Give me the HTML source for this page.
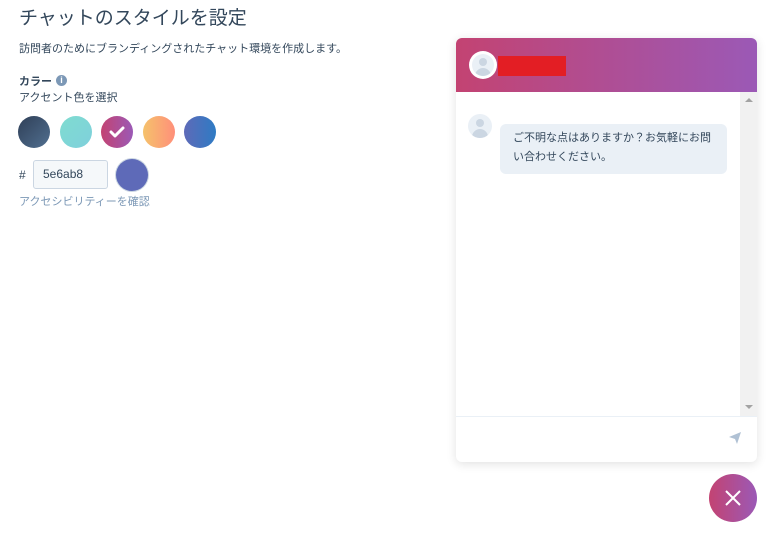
<!DOCTYPE html>
<html><head><meta charset="utf-8"><style>
body{margin:0;width:784px;height:533px;background:#fff;font-family:"Liberation Sans","Noto Sans CJK JP",sans-serif;color:#33475b;position:relative;overflow:hidden}
.a{position:absolute;white-space:nowrap}
.c{position:absolute;width:32px;height:32px;border-radius:50%}
</style></head><body>
<div class="a" style="left:19px;top:3px;font-size:19px;color:#33475b">チャットのスタイルを設定</div>
<div class="a" style="left:19px;top:40px;font-size:11px">訪問者のためにブランディングされたチャット環境を作成します。</div>
<div class="a" style="left:19px;top:73px;font-size:11px;font-weight:bold">カラー</div>
<div class="a" style="left:56px;top:75px;width:11px;height:11px;border-radius:50%;background:#7c98b6;color:#fff;font-size:9px;font-weight:bold;text-align:center;line-height:11px">i</div>
<div class="a" style="left:19px;top:89px;font-size:11px">アクセント色を選択</div>
<div class="c" style="left:18px;top:116px;background:linear-gradient(135deg,#2f3f57,#516f90)"></div>
<div class="c" style="left:60px;top:116px;background:linear-gradient(135deg,#7fdcd0,#7fd0dc)"></div>
<div class="c" style="left:101px;top:116px;background:linear-gradient(90deg,#c34372,#9b59b6)"><svg width="32" height="32"><path d="M10 16l4 4 8-8" stroke="#fff" stroke-width="3" fill="none" stroke-linecap="round" stroke-linejoin="round"/></svg></div>
<div class="c" style="left:143px;top:116px;background:linear-gradient(90deg,#f5c26b,#ff8f7a)"></div>
<div class="c" style="left:184px;top:116px;background:linear-gradient(90deg,#5e6ab8,#2e7bc4)"></div>
<div class="a" style="left:19px;top:168px;font-size:12px">#</div>
<div class="a" style="left:33px;top:160px;width:75px;height:29px;border:1px solid #cbd6e2;background:#f5f8fa;border-radius:3px;box-sizing:border-box;padding-left:9px;line-height:27px;font-size:12px">5e6ab8</div>
<div class="c" style="left:116px;top:159px;background:#5e6ab8;box-shadow:0 0 0 1px #cbd6e2"></div>
<div class="a" style="left:19px;top:193px;font-size:11px;color:#7c98b6">アクセシビリティーを確認</div>

<div class="a" style="left:456px;top:38px;width:301px;height:424px;border-radius:6px;background:#fff;box-shadow:0 2px 10px rgba(0,0,0,.12);overflow:hidden;white-space:normal">
 <div style="height:54px;background:linear-gradient(90deg,#c34372,#9b59b6);position:relative">
  <div style="position:absolute;left:13px;top:13px;width:28px;height:28px;border-radius:50%;background:#fff;overflow:hidden"><div style="position:absolute;left:3px;top:3px;width:22px;height:22px;border-radius:50%;background:#eaf0f6;overflow:hidden"><div style="position:absolute;left:7px;top:4px;width:8px;height:8px;border-radius:50%;background:#cbd6e2"></div><div style="position:absolute;left:3px;top:14px;width:16px;height:12px;border-radius:8px 8px 0 0;background:#cbd6e2"></div></div></div>
  <div style="position:absolute;left:42px;top:18px;width:68px;height:20px;background:#e31e24"></div>
 </div>
 <div style="position:absolute;left:284px;top:54px;width:17px;height:324px;background:#f1f1f1"></div>
 <div style="position:absolute;left:289px;top:60px;border:4px solid transparent;border-bottom:4px solid #a3a3a3;border-top:0"></div>
 <div style="position:absolute;left:289px;top:367px;border:4px solid transparent;border-top:4px solid #a3a3a3;border-bottom:0"></div>
 <div style="position:absolute;left:12px;top:76px;width:24px;height:24px;border-radius:50%;background:#eaf0f6;overflow:hidden"><div style="position:absolute;left:8px;top:5px;width:8px;height:8px;border-radius:50%;background:#cbd6e2"></div><div style="position:absolute;left:4px;top:15px;width:16px;height:12px;border-radius:8px 8px 0 0;background:#cbd6e2"></div></div>
 <div style="position:absolute;left:44px;top:86px;width:227px;height:50px;background:#eaf0f6;border-radius:6px;box-sizing:border-box;padding:5px 12px 0 13px;font-size:11px;line-height:19px;color:#33475b;white-space:normal;word-break:break-all">ご不明な点はありますか？お気軽にお問い合わせください。</div>
 <div style="position:absolute;left:0;top:378px;width:301px;height:1px;background:#eaf0f6"></div>
 <svg style="position:absolute;left:272px;top:393px" width="14" height="14" viewBox="0 0 14 14"><path d="M1 6L13 1 9 13 7 8z" fill="#b0c1d4"/></svg>
</div>
<div class="a" style="left:709px;top:474px;width:48px;height:48px;border-radius:50%;background:linear-gradient(90deg,#c34372,#9b59b6)"><svg width="48" height="48"><path d="M17 17l14 14M31 17L17 31" stroke="#fff" stroke-width="2"/></svg></div>
</body></html>
